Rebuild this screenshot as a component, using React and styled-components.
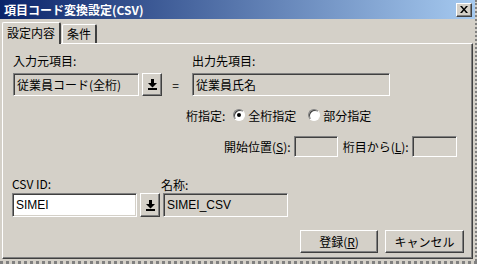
import React from 'react';
import styled, { createGlobalStyle } from 'styled-components';

const Global = createGlobalStyle`
  html, body { margin: 0; padding: 0; background: #d4d0c8; }
  body {
    font-family: "Noto Sans CJK JP", "Liberation Sans", sans-serif;
    font-size: 12px;
    color: #000;
  }
`;

const Window = styled.div`
  width: 477px;
  height: 264px;
  background: #d4d0c8;
  display: flex;
  flex-direction: column;
  box-sizing: border-box;
  border-right: 2px dotted #808080;
  border-bottom: 3px dotted #808080;
  overflow: hidden;
`;

const TitleBar = styled.div`
  height: 19px;
  flex: none;
  display: flex;
  align-items: center;
  justify-content: space-between;
  padding: 0 3px 0 4px;
  background: linear-gradient(to right, #0a246a, #a6caf0);
  color: #fff;
  font-weight: bold;
  font-size: 12px;
  line-height: 19px;
`;

const CloseButton = styled.div`
  width: 16px;
  height: 14px;
  box-sizing: border-box;
  background: #d4d0c8;
  border: 1px solid;
  border-color: #fff #404040 #404040 #fff;
  box-shadow: inset -1px -1px 0 #808080;
  display: flex;
  align-items: center;
  justify-content: center;
`;

const Body = styled.div`
  flex: 1;
  display: flex;
  flex-direction: column;
  padding: 2px 0 0 2px;
`;

const TabStrip = styled.div`
  display: flex;
  align-items: flex-end;
  height: 22px;
  flex: none;
`;

const Tab = styled.div`
  box-sizing: border-box;
  height: ${p => (p.$active ? '22px' : '19px')};
  padding: 0 4px;
  margin-left: ${p => (p.$active ? '0' : '1px')};
  margin-bottom: ${p => (p.$active ? '-1px' : '0')};
  border-top: 1px solid #fff;
  border-left: 1px solid #fff;
  border-right: 2px solid #404040;
  border-radius: 2px 2px 0 0;
  background: #d4d0c8;
  line-height: ${p => (p.$active ? '19px' : '17px')};
  position: relative;
  z-index: ${p => (p.$active ? 2 : 1)};
`;

const Panel = styled.div`
  flex: 1;
  box-sizing: border-box;
  border-top: 1px solid #fff;
  border-left: 1px solid #fff;
  border-right: 1px solid #404040;
  border-bottom: 1px solid #404040;
  box-shadow: inset -1px -1px 0 #808080;
  margin-right: 2px;
  margin-bottom: 2px;
  padding: 10px 8px 0 10px;
  display: flex;
  flex-direction: column;
`;

const MapGrid = styled.div`
  display: grid;
  grid-template-columns: 126px 20px 24px 198px;
  grid-template-rows: 14px 23px;
  column-gap: 3px;
  row-gap: 5px;
  align-items: center;
`;

const Label = styled.div`
  line-height: 14px;
  white-space: nowrap;
  grid-column: ${p => p.$col || 'auto'};
`;

const Field = styled.div`
  box-sizing: border-box;
  height: ${p => p.$h || 23}px;
  width: ${p => (p.$w ? `${p.$w}px` : 'auto')};
  background: ${p => (p.$readonly ? '#d4d0c8' : '#fff')};
  border: 1px solid;
  border-color: #808080 #fff #fff #808080;
  box-shadow: inset 1px 1px 0 #404040, inset -1px -1px 0 #d4d0c8;
  padding: 0 3px;
  display: flex;
  align-items: center;
  white-space: nowrap;
  font-family: ${p => (p.$latin ? '"Liberation Sans", sans-serif' : 'inherit')};
`;

const DropButton = styled.div`
  box-sizing: border-box;
  height: ${p => p.$h || 23}px;
  width: 20px;
  background: #d4d0c8;
  border: 1px solid;
  border-color: #fff #404040 #404040 #fff;
  box-shadow: inset -1px -1px 0 #808080;
  display: flex;
  align-items: center;
  justify-content: center;
`;

const Equals = styled.div`
  text-align: center;
  margin-left: -3px;
`;

const RadioRow = styled.div`
  display: flex;
  align-items: center;
  margin: 12px 0 0 173px;
  height: 14px;
  gap: 4px;
`;

const RadioItem = styled.label`
  display: flex;
  align-items: center;
  gap: 3px;
  margin-left: ${p => p.$ml || 0}px;
`;

const RadioCircle = styled.span`
  width: 12px;
  height: 12px;
  box-sizing: border-box;
  border-radius: 50%;
  background: #fff;
  border: 1px solid;
  border-color: #808080 #fff #fff #808080;
  box-shadow: inset 1px 1px 0 #404040;
  display: flex;
  align-items: center;
  justify-content: center;
  &::after {
    content: '';
    width: 4px;
    height: 4px;
    border-radius: 50%;
    background: ${p => (p.$checked ? '#000' : 'transparent')};
  }
`;

const RangeRow = styled.div`
  display: flex;
  align-items: center;
  margin: 14px 0 0 211px;
  gap: 3px;
`;

const RangeLabel = styled.span`
  margin-left: ${p => p.$ml || 0}px;
  white-space: nowrap;
`;

const Key = styled.span`
  text-decoration: underline;
`;

const IdGrid = styled.div`
  display: grid;
  grid-template-columns: 125px 20px 125px;
  grid-template-rows: 14px 24px;
  column-gap: 3px;
  row-gap: 2px;
  margin-top: 20px;
  margin-left: -1px;
  align-items: center;
`;

const IdName = styled.div`
  margin-left: -2px;
`;

const ButtonRow = styled.div`
  display: flex;
  justify-content: flex-end;
  gap: 7px;
  margin-top: 13px;
`;

const PushButton = styled.div`
  box-sizing: border-box;
  width: ${p => p.$w || 78}px;
  height: 23px;
  background: #d4d0c8;
  border: 1px solid;
  border-color: #fff #404040 #404040 #fff;
  box-shadow: inset -1px -1px 0 #808080;
  display: flex;
  align-items: center;
  justify-content: center;
`;

const DownArrow = () => (
  <svg width="9" height="11" viewBox="0 0 9 11">
    <path d="M3 0h3v4h3L4.5 8.5 0 4h3z" fill="#000" />
    <rect x="0" y="9" width="9" height="2" fill="#000" />
  </svg>
);

const CloseGlyph = () => (
  <svg width="8" height="7" viewBox="0 0 8 7">
    <path d="M0 0h2l2 2.5L6 0h2L5 3.5 8 7H6L4 4.5 2 7H0l3-3.5z" fill="#000" />
  </svg>
);

export default function App() {
  return (
    <>
      <Global />
      <Window>
        <TitleBar>
          <span>項目コード変換設定(CSV)</span>
          <CloseButton><CloseGlyph /></CloseButton>
        </TitleBar>
        <Body>
          <TabStrip>
            <Tab $active>設定内容</Tab>
            <Tab>条件</Tab>
          </TabStrip>
          <Panel>
            <MapGrid>
              <Label $col="1 / span 3">入力元項目:</Label>
              <Label>出力先項目:</Label>
              <Field $readonly>従業員コード(全桁)</Field>
              <DropButton><DownArrow /></DropButton>
              <Equals>=</Equals>
              <Field $readonly>従業員氏名</Field>
            </MapGrid>

            <RadioRow>
              <span>桁指定:</span>
              <RadioItem $ml={4}><RadioCircle $checked />全桁指定</RadioItem>
              <RadioItem $ml={8}><RadioCircle />部分指定</RadioItem>
            </RadioRow>

            <RangeRow>
              <RangeLabel>開始位置(<Key>S</Key>):</RangeLabel>
              <Field $readonly $w={44} $h={21} />
              <RangeLabel $ml={2}>桁目から(<Key>L</Key>):</RangeLabel>
              <Field $readonly $w={45} $h={21} />
            </RangeRow>

            <IdGrid>
              <Label $col="1 / span 2">CSV ID:</Label>
              <IdName>名称:</IdName>
              <Field $h={24} $latin>SIMEI</Field>
              <DropButton $h={24}><DownArrow /></DropButton>
              <Field $h={24} $readonly $latin>SIMEI_CSV</Field>
            </IdGrid>

            <ButtonRow>
              <PushButton>登録(<Key>R</Key>)</PushButton>
              <PushButton $w={79}>キャンセル</PushButton>
            </ButtonRow>
          </Panel>
        </Body>
      </Window>
    </>
  );
}
